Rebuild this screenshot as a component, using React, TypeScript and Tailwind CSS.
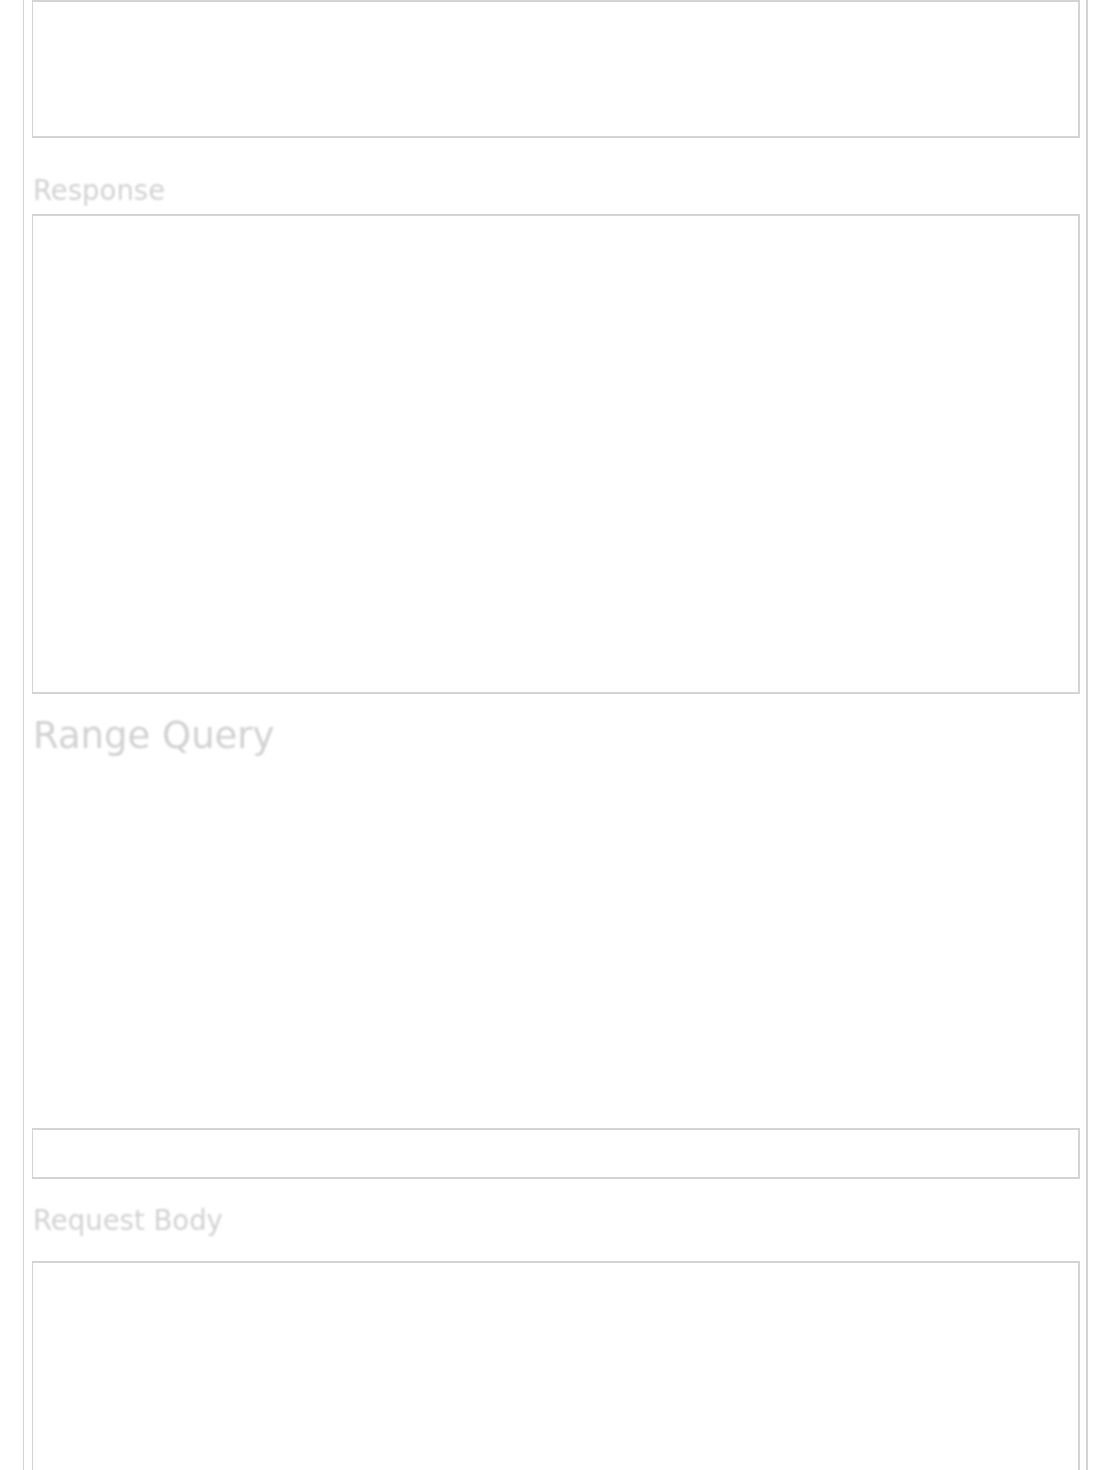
const boxClass =
  "border-t-2 border-r-2 border-b-2 border-l border-[#d4d4d4] bg-white";

const labelClass =
  "pl-px text-[27.5px] leading-[32px] text-[#d2d2d2] blur-[1px] select-none";

export default function App() {
  return (
    <div
      className="min-h-[1470px] bg-white overflow-hidden"
      style={{ fontFamily: '"DejaVu Sans", Verdana, sans-serif' }}
    >
      <div className="ml-[23px] w-[1065px] min-h-[1470px] border-l border-r-2 border-[#d4d4d4] pl-[8px] pr-[6px]">
        {/* previous textarea (request body of the section above) */}
        <div className={`${boxClass} h-[138px]`} />

        <div className={`${labelClass} mt-[36px]`}>Response</div>
        <div className={`${boxClass} mt-[8px] h-[480px]`} />

        <h2 className="mt-[20px] pl-px text-[37px] leading-[44px] font-normal text-[#d2d2d2] blur-[1px]">
          Range Query
        </h2>

        <div className="h-[370px]" />

        <div className={`${boxClass} h-[51px]`} />

        <div className={`${labelClass} mt-[25px]`}>Request Body</div>
        <div className={`${boxClass} mt-[25px] h-[300px]`} />
      </div>
    </div>
  );
}
